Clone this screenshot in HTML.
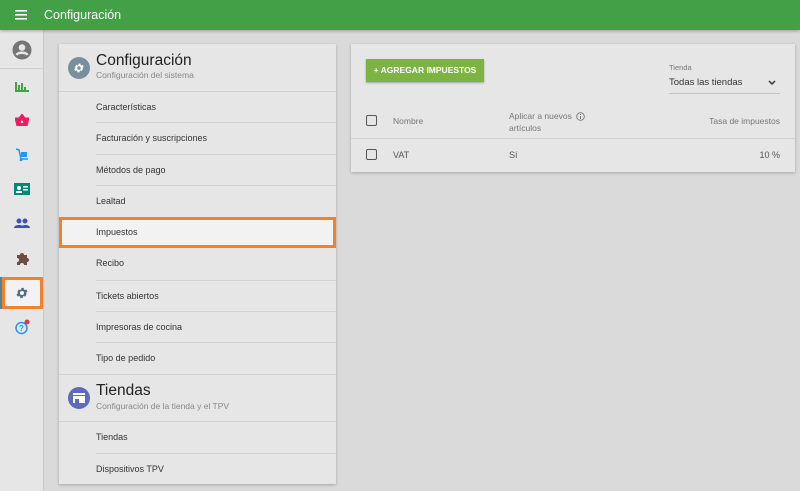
<!DOCTYPE html>
<html><head><meta charset="utf-8"><style>
*{box-sizing:border-box;margin:0;padding:0}
body{width:800px;height:491px;overflow:hidden;background:#dadada;font-family:"Liberation Sans",sans-serif;position:relative}
.hdr{position:absolute;left:0;top:0;width:800px;height:30px;background:#43a047;color:#fff;box-shadow:0 1px 3px rgba(0,0,0,.3);z-index:2}
.hdr .t{position:absolute;left:44px;top:8px;font-size:12.5px}
.side{position:absolute;left:0;top:30px;width:44px;height:461px;background:#e6e6e6;border-right:1px solid #c8c8c8}
.ic{position:absolute;left:12px}
.card{position:absolute;background:#e6e6e6;box-shadow:0 1px 3px rgba(0,0,0,.25)}
.it{position:absolute;left:96px;width:240px;font-size:9px;color:#333;border-top:1px solid #d2d2d2;height:31.5px;line-height:30px}
.sec{position:absolute;left:59px;width:277px;border-top:1px solid #d2d2d2}
.sec .ti{position:absolute;left:37px;font-size:15.5px;color:#222}
.sec .su{position:absolute;left:37px;font-size:8.5px;color:#888}
.circ{position:absolute;left:9px;width:22px;height:22px;border-radius:50%}
.cb{position:absolute;width:11px;height:11px;border:1.5px solid #555;border-radius:2px}
.sm{position:absolute;font-size:8.5px;color:#555}
</style></head><body>
<div class="hdr"><svg style="position:absolute;left:15px;top:10px" width="12" height="10"><rect y="0" width="12" height="1.6" fill="#fff"/><rect y="4" width="12" height="1.6" fill="#fff"/><rect y="8" width="12" height="1.6" fill="#fff"/></svg><span class="t">Configuración</span></div>
<div class="side">
<svg class="ic" style="top:10px;left:12px" width="20" height="20" viewBox="0 0 20 20"><circle cx="10" cy="10" r="9.5" fill="#757575"/><circle cx="10" cy="7.5" r="3.3" fill="#e6e6e6"/><path d="M4.5 15c1.5-3 9.5-3 11 0" stroke="#e6e6e6" stroke-width="2.5" fill="none"/></svg>
<div style="position:absolute;left:0;top:38px;width:44px;border-top:1px solid #cfcfcf"></div>
<svg class="ic" style="top:50px;left:15px" width="14" height="12"><rect x="0" y="2" width="2" height="10" fill="#43a047"/><rect x="3" y="5" width="2" height="7" fill="#43a047"/><rect x="6" y="3" width="2" height="9" fill="#43a047"/><rect x="9" y="7" width="2" height="5" fill="#43a047"/><rect x="0" y="10" width="14" height="2" fill="#43a047"/></svg>
<svg class="ic" style="top:84px;left:15px" width="14" height="12"><path d="M0 4h14l-2 8H2z M4 4l3-4 3 4" fill="#e91e63" stroke="#e91e63"/><circle cx="7" cy="8" r="1.2" fill="#fff"/></svg>
<svg class="ic" style="top:118px;left:15px" width="14" height="14"><path d="M1 1l3 1 2 9h7" stroke="#2196f3" stroke-width="1.5" fill="none"/><rect x="6" y="4" width="6" height="5" fill="#2196f3"/><circle cx="6" cy="12" r="1.3" fill="#2196f3"/></svg>
<svg class="ic" style="top:153px;left:14px" width="16" height="12"><rect width="16" height="12" fill="#00897b"/><circle cx="5" cy="5" r="2" fill="#fff"/><rect x="2" y="8" width="6" height="2" fill="#fff"/><rect x="9" y="3" width="5" height="1.5" fill="#fff"/><rect x="9" y="6" width="5" height="1.5" fill="#fff"/></svg>
<svg class="ic" style="top:188px;left:14px" width="16" height="10"><circle cx="5" cy="3" r="2.5" fill="#3f51b5"/><circle cx="11" cy="3" r="2.5" fill="#3f51b5"/><path d="M0 10c0-4 10-4 10 0z M7 10c0-4 9-4 9 0z" fill="#3f51b5"/></svg>
<svg class="ic" style="top:221px;left:15px" width="14" height="14"><path d="M2 4h3a2 2 0 014 0h3v3a2 2 0 010 4v3H9a2 2 0 00-4 0H2v-3a2 2 0 000-4z" fill="#6d4c41"/></svg>
<div style="position:absolute;left:2px;top:247px;width:41px;height:32px;border:3px solid #f0822e;background:#f2f2f2"></div>
<div style="position:absolute;left:0;top:247px;width:2px;height:32px;background:#607d8b"></div>
<svg class="ic" style="top:256px;left:15px" width="14" height="14" viewBox="0 0 24 24"><path fill="#546e7a" d="M19.4 13a7.5 7.5 0 000-2l2.1-1.6-2-3.5-2.5 1a7 7 0 00-1.7-1l-.4-2.6h-4l-.4 2.6a7 7 0 00-1.7 1l-2.5-1-2 3.5L4.6 11a7.5 7.5 0 000 2l-2.1 1.6 2 3.5 2.5-1a7 7 0 001.7 1l.4 2.6h4l.4-2.6a7 7 0 001.7-1l2.5 1 2-3.5zM12 15.5a3.5 3.5 0 110-7 3.5 3.5 0 010 7z"/></svg>
<svg class="ic" style="top:289px;left:14px" width="18" height="16"><circle cx="7.5" cy="9" r="5.5" fill="none" stroke="#2196f3" stroke-width="1.5"/><text x="5" y="12" font-size="8" fill="#2196f3" font-family="Liberation Sans" font-weight="bold">?</text><circle cx="13" cy="3" r="2.5" fill="#e53935"/></svg>
</div>

<div class="card" style="left:59px;top:44px;width:277px;height:440px"></div>
<div class="sec" style="top:44px;height:47px;border:none"><div class="circ" style="top:13px;background:#78909c"></div><svg style="position:absolute;left:14px;top:18px" width="12" height="12" viewBox="0 0 24 24"><path fill="#fff" d="M19.4 13a7.5 7.5 0 000-2l2.1-1.6-2-3.5-2.5 1a7 7 0 00-1.7-1l-.4-2.6h-4l-.4 2.6a7 7 0 00-1.7 1l-2.5-1-2 3.5L4.6 11a7.5 7.5 0 000 2l-2.1 1.6 2 3.5 2.5-1a7 7 0 001.7 1l.4 2.6h4l.4-2.6a7 7 0 001.7-1l2.5 1 2-3.5zM12 15.5a3.5 3.5 0 110-7 3.5 3.5 0 010 7z"/></svg><span class="ti" style="top:8px">Configuración</span><span class="su" style="top:26px">Configuración del sistema</span></div>
<div class="it" style="top:91px;left:59px;padding-left:37px;width:277px">Características</div>
<div class="it" style="top:122px">Facturación y suscripciones</div>
<div class="it" style="top:154px">Métodos de pago</div>
<div class="it" style="top:185px">Lealtad</div>
<div style="position:absolute;left:59px;top:217px;width:277px;height:31px;border:3px solid #f0822e;background:#f2f2f2;font-size:9px;color:#333;line-height:25px;padding-left:34px">Impuestos</div>
<div class="it" style="top:248px;border-top:none">Recibo</div>
<div class="it" style="top:280px">Tickets abiertos</div>
<div class="it" style="top:311px">Impresoras de cocina</div>
<div class="it" style="top:342px">Tipo de pedido</div>
<div class="sec" style="top:374px;height:47px"><div class="circ" style="top:12px;background:#5c6bc0"></div><svg style="position:absolute;left:14px;top:18px" width="12" height="10"><rect width="12" height="2" fill="#fff"/><rect y="3" width="12" height="7" fill="#fff"/><rect x="2" y="6" width="4" height="4" fill="#5c6bc0"/></svg><span class="ti" style="top:7px">Tiendas</span><span class="su" style="top:26px">Configuración de la tienda y el TPV</span></div>
<div class="it" style="top:421px;left:59px;padding-left:37px;width:277px">Tiendas</div>
<div class="it" style="top:453px">Dispositivos TPV</div>

<div class="card" style="left:351px;top:44px;width:444px;height:128px"></div>
<div style="position:absolute;left:366px;top:59px;width:118px;height:23px;background:#7cb342;color:#fff;font-size:8.5px;font-weight:bold;line-height:23px;text-align:center;box-shadow:0 1px 2px rgba(0,0,0,.3)">+ AGREGAR IMPUESTOS</div>
<div class="sm" style="left:669px;top:63px;font-size:7.5px;color:#777">Tienda</div>
<div style="position:absolute;left:669px;top:77px;font-size:9.5px;color:#333">Todas las tiendas</div>
<svg style="position:absolute;left:768px;top:80px" width="8" height="6"><path d="M1 1l3 3 3-3" stroke="#333" stroke-width="1.5" fill="none"/></svg>
<div style="position:absolute;left:669px;top:93px;width:111px;border-top:1px solid #c4c4c4"></div>
<div class="cb" style="left:366px;top:115px"></div>
<div class="sm" style="left:393px;top:116px;color:#777">Nombre</div>
<div class="sm" style="left:509px;top:110px;color:#777;line-height:12px">Aplicar a nuevos<br>artículos</div>
<svg style="position:absolute;left:576px;top:112px" width="9" height="9"><circle cx="4.5" cy="4.5" r="3.8" fill="none" stroke="#777" stroke-width=".9"/><rect x="4" y="4" width="1" height="3" fill="#777"/><rect x="4" y="2" width="1" height="1" fill="#777"/></svg>
<div class="sm" style="left:700px;top:116px;width:80px;text-align:right;color:#777">Tasa de impuestos</div>
<div style="position:absolute;left:351px;top:138px;width:444px;border-top:1px solid #d2d2d2"></div>
<div class="cb" style="left:366px;top:149px"></div>
<div class="sm" style="left:393px;top:150px;font-size:9px">VAT</div>
<div class="sm" style="left:509px;top:150px;font-size:9px">Sí</div>
<div class="sm" style="left:700px;top:150px;width:80px;text-align:right;font-size:9px">10 %</div>
</body></html>
